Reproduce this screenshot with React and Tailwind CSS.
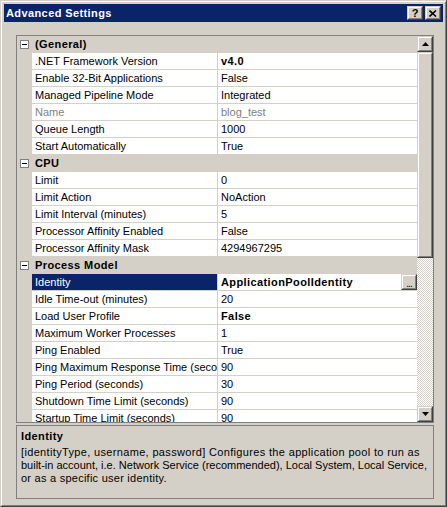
import React from "react";

const sections = [
  {
    title: "(General)",
    items: [
      { name: ".NET Framework Version", value: "v4.0", bold: true },
      { name: "Enable 32-Bit Applications", value: "False" },
      { name: "Managed Pipeline Mode", value: "Integrated" },
      { name: "Name", value: "blog_test", disabled: true },
      { name: "Queue Length", value: "1000" },
      { name: "Start Automatically", value: "True" },
    ],
  },
  {
    title: "CPU",
    items: [
      { name: "Limit", value: "0" },
      { name: "Limit Action", value: "NoAction" },
      { name: "Limit Interval (minutes)", value: "5" },
      { name: "Processor Affinity Enabled", value: "False" },
      { name: "Processor Affinity Mask", value: "4294967295" },
    ],
  },
  {
    title: "Process Model",
    items: [
      { name: "Identity", value: "ApplicationPoolIdentity", bold: true, selected: true },
      { name: "Idle Time-out (minutes)", value: "20" },
      { name: "Load User Profile", value: "False", bold: true },
      { name: "Maximum Worker Processes", value: "1" },
      { name: "Ping Enabled", value: "True" },
      { name: "Ping Maximum Response Time (seconds)", value: "90" },
      { name: "Ping Period (seconds)", value: "30" },
      { name: "Shutdown Time Limit (seconds)", value: "90" },
      { name: "Startup Time Limit (seconds)", value: "90" },
    ],
  },
];

// classic raised 3d box
function Raised({ className = "", children }) {
  return (
    <div
      className={`border border-t-[#d4d0c8] border-l-[#d4d0c8] border-r-[#404040] border-b-[#404040] ${className}`}
    >
      <div className="w-full h-full border border-t-white border-l-white border-r-[#808080] border-b-[#808080] bg-[#d4d0c8] flex items-center justify-center">
        {children}
      </div>
    </div>
  );
}

function Arrow({ down }) {
  return (
    <svg width="7" height="4" viewBox="0 0 7 4">
      {down ? (
        <polygon points="0,0 7,0 3.5,4" fill="#000" />
      ) : (
        <polygon points="0,4 7,4 3.5,0" fill="#000" />
      )}
    </svg>
  );
}

function CategoryRow({ title }) {
  return (
    <div className="flex h-[17px] bg-[#d4d0c8] shrink-0">
      <div className="w-[15px] flex items-center justify-center">
        <div className="w-[9px] h-[9px] border border-[#808080] bg-white flex items-center justify-center">
          <div className="w-[5px] h-px bg-black" />
        </div>
      </div>
      <div className="pl-[3px] font-bold tracking-[0.4px] leading-[17px]">{title}</div>
    </div>
  );
}

function PropRow({ item }) {
  return (
    <div className="flex h-[17px] shrink-0">
      <div className="w-[15px] bg-[#d4d0c8]" />
      <div
        className={`w-[186px] border-r border-b border-[#d4d0c8] pl-[3px] leading-[16px] whitespace-nowrap overflow-hidden ${
          item.selected ? "bg-[#0a246a] text-white" : "bg-white"
        } ${item.disabled ? "text-[#808080]" : ""}`}
      >
        {item.name}
      </div>
      <div
        className={`flex-1 flex bg-white border-b border-[#d4d0c8] leading-[16px] whitespace-nowrap overflow-hidden ${
          item.bold ? "font-bold tracking-[0.4px]" : ""
        } ${item.disabled ? "text-[#808080]" : ""}`}
      >
        <span className="pl-[3px] flex-1">{item.value}</span>
        {item.selected && (
          <Raised className="w-[16px] h-[16px] shrink-0">
            <span className="text-[10px] leading-[8px] font-normal tracking-[-1px] mt-[3px]">...</span>
          </Raised>
        )}
      </div>
    </div>
  );
}

export default function App() {
  return (
    <div
      className="w-[447px] h-[507px] text-[11px] text-black"
      style={{ fontFamily: '"Liberation Sans", Arial, sans-serif' }}
    >
      <div className="w-full h-full border border-t-[#d4d0c8] border-l-[#d4d0c8] border-r-[#404040] border-b-[#404040]">
        <div className="w-full h-full border border-t-white border-l-white border-r-[#808080] border-b-[#808080] bg-[#d4d0c8] p-[2px] flex flex-col">
          {/* title bar */}
          <div className="h-[18px] bg-[#0a246a] flex items-center pl-[2px] pr-[2px] shrink-0">
            <span className="flex-1 text-white font-bold text-[11px] tracking-[0.4px]">Advanced Settings</span>
            <Raised className="w-[16px] h-[14px]">
              <span className="font-bold text-[11px] leading-none">?</span>
            </Raised>
            <Raised className="w-[16px] h-[14px] ml-[2px]">
              <svg width="8" height="7" viewBox="0 0 8 7">
                <path d="M0.5 0.5 L7 6.5 M7 0.5 L0.5 6.5" stroke="#000" strokeWidth="1.6" />
              </svg>
            </Raised>
          </div>

          <div className="flex-1 flex flex-col pt-[13px] pl-[12px] pr-[9px] pb-[2px]">
            {/* property grid */}
            <div className="h-[388px] border border-[#808080] flex bg-[#d4d0c8] shrink-0">
              <div className="flex-1 flex flex-col overflow-hidden">
                {sections.map((s) => (
                  <React.Fragment key={s.title}>
                    <CategoryRow title={s.title} />
                    {s.items.map((it) => (
                      <PropRow key={it.name} item={it} />
                    ))}
                  </React.Fragment>
                ))}
              </div>
              {/* scrollbar */}
              <div className="w-[16px] flex flex-col">
                <Raised className="h-[16px] shrink-0">
                  <Arrow />
                </Raised>
                <Raised className="h-[206px] shrink-0" />
                <div className="flex-1 bg-[repeating-conic-gradient(#d4d0c8_0%_25%,#ffffff_0%_50%)] bg-[length:2px_2px]" />
                <Raised className="h-[16px] shrink-0">
                  <Arrow down />
                </Raised>
              </div>
            </div>

            {/* description */}
            <div className="mt-[2px] h-[74px] border border-[#808080] px-[4px] pt-[3px] overflow-hidden">
              <div className="font-bold tracking-[0.4px] leading-[14px]">Identity</div>
              <div className="mt-[3px] leading-[13px] whitespace-nowrap">
                <div className="tracking-[0.34px]">
                  [identityType, username, password] Configures the application pool to run as
                </div>
                <div>built-in account, i.e. Network Service (recommended), Local System, Local Service,</div>
                <div className="tracking-[0.25px]">or as a specific user identity.</div>
              </div>
            </div>
          </div>
        </div>
      </div>
    </div>
  );
}
